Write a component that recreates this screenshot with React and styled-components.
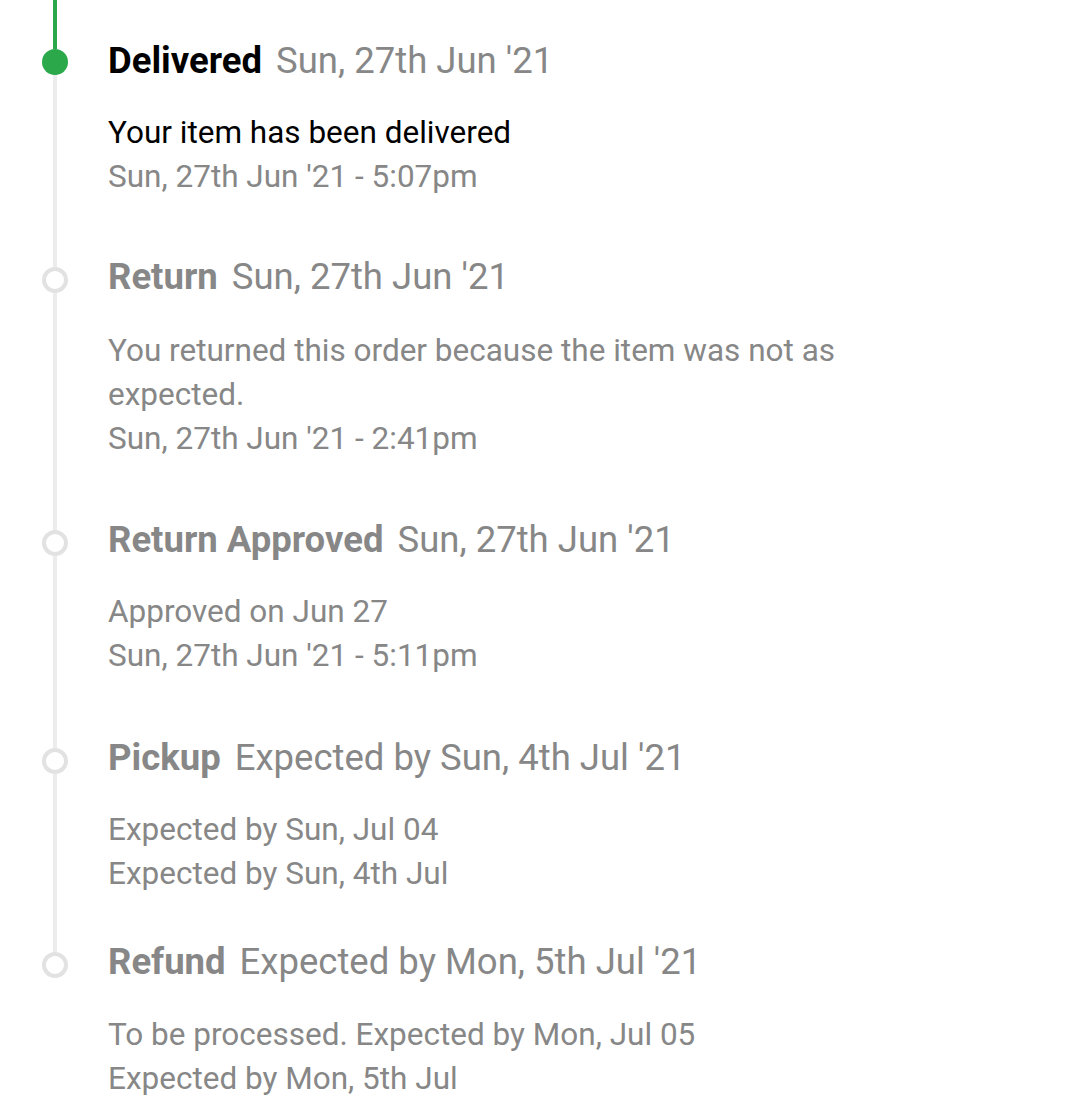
import React from "react";
import styled, { createGlobalStyle } from "styled-components";

const GlobalStyle = createGlobalStyle`
  body {
    margin: 0;
    background: #fff;
    font-family: Roboto, "Liberation Sans", sans-serif;
  }
`;

const Page = styled.div`
  width: 1080px;
  min-height: 1120px;
  background: #fff;
`;

const List = styled.ol`
  list-style: none;
  margin: 0;
  padding: 0;
`;

const Item = styled.li`
  display: grid;
  grid-template-columns: 108px 760px;
`;

const Rail = styled.div`
  display: flex;
  flex-direction: column;
  align-items: center;
  padding-left: 2px;
`;

const Segment = styled.div`
  width: 4px;
  height: ${(p) => (p.$height ? `${p.$height}px` : "auto")};
  flex: ${(p) => (p.$height ? "none" : "1")};
  background: ${(p) => p.$color};
`;

const Dot = styled.div`
  width: 26px;
  height: 26px;
  flex: none;
  box-sizing: border-box;
  border-radius: 50%;
  background: ${(p) => (p.$done ? "#2aa84a" : "#fff")};
  border: ${(p) => (p.$done ? "none" : "4px solid #e2e2e2")};
`;

const Content = styled.div`
  padding-top: ${(p) => p.$top}px;
  padding-bottom: ${(p) => p.$bottom}px;
`;

const Title = styled.div`
  display: flex;
  align-items: baseline;
  font-size: 36.5px;
  line-height: 44px;
  color: #878787;
  white-space: nowrap;
`;

const Status = styled.span`
  font-weight: 700;
  margin-right: 14px;
  color: ${(p) => (p.$done ? "#000" : "#878787")};
`;

const Body = styled.div`
  margin-top: ${(p) => p.$gap}px;
  font-size: 31.5px;
  line-height: 44px;
  color: ${(p) => (p.$done ? "#000" : "#878787")};
`;

const Stamp = styled.div`
  font-size: 31.5px;
  line-height: 44px;
  color: #878787;
`;

const steps = [
  {
    status: "Delivered",
    date: "Sun, 27th Jun '21",
    text: "Your item has been delivered",
    stamp: "Sun, 27th Jun '21 - 5:07pm",
    done: true,
    top: 39,
    gap: 28,
    bottom: 56,
  },
  {
    status: "Return",
    date: "Sun, 27th Jun '21",
    text: "You returned this order because the item was not as expected.",
    stamp: "Sun, 27th Jun '21 - 2:41pm",
    top: 0,
    gap: 30,
    bottom: 57,
  },
  {
    status: "Return Approved",
    date: "Sun, 27th Jun '21",
    text: "Approved on Jun 27",
    stamp: "Sun, 27th Jun '21 - 5:11pm",
    top: 0,
    gap: 28,
    bottom: 58,
  },
  {
    status: "Pickup",
    date: "Expected by Sun, 4th Jul '21",
    text: "Expected by Sun, Jul 04",
    stamp: "Expected by Sun, 4th Jul",
    top: 0,
    gap: 28,
    bottom: 44,
  },
  {
    status: "Refund",
    date: "Expected by Mon, 5th Jul '21",
    text: "To be processed. Expected by Mon, Jul 05",
    stamp: "Expected by Mon, 5th Jul",
    top: 0,
    gap: 29,
    bottom: 20,
  },
];

const App = () => {
  return (
    <Page>
      <GlobalStyle />
      <List>
        {steps.map((step, i) => {
          const first = i === 0;
          const last = i === steps.length - 1;
          return (
            <Item key={step.status}>
              <Rail>
                <Segment
                  $height={step.top + (first ? 10 : 12)}
                  $color={first ? "#2aa84a" : "#ececec"}
                />
                <Dot $done={step.done} />
                <Segment $color={last ? "transparent" : "#ececec"} />
              </Rail>
              <Content $top={step.top} $bottom={step.bottom}>
                <Title>
                  <Status $done={step.done}>{step.status}</Status>
                  {step.date}
                </Title>
                <Body $done={step.done} $gap={step.gap}>
                  {step.text}
                </Body>
                <Stamp>{step.stamp}</Stamp>
              </Content>
            </Item>
          );
        })}
      </List>
    </Page>
  );
};

export default App;
